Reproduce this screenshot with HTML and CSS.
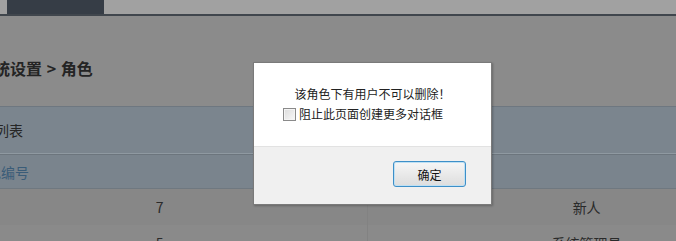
FILE: index.html
```html
<!DOCTYPE html>
<html lang="zh-CN">
<head>
<meta charset="utf-8">
<title>角色</title>
<link rel="stylesheet" href="styles.css">
</head>
<body>
<div class="page">
  <div class="topbar"><div class="tab"></div></div>
  <div class="content">
    <h2 class="title">系统设置 &gt; 角色</h2>
    <div class="panel">
      <div class="panel-head">角色列表</div>
      <table class="grid">
        <colgroup><col class="c1"><col class="c2"></colgroup>
        <thead>
          <tr><th>角色编号</th><th></th></tr>
        </thead>
        <tbody>
          <tr><td>7</td><td>新人</td></tr>
          <tr class="alt"><td>5</td><td>系统管理员</td></tr>
        </tbody>
      </table>
    </div>
  </div>
</div>
<div class="dialog">
  <div class="dialog-body">
    <p class="msg">该角色下有用户不可以删除！</p>
    <label class="opt"><span class="box"></span>阻止此页面创建更多对话框</label>
  </div>
  <div class="dialog-foot">
    <button class="btn">确定</button>
  </div>
</div>
</body>
</html>
```
FILE: styles.css
```css
html, body {
  margin: 0;
  padding: 0;
  width: 676px;
  height: 241px;
  overflow: hidden;
  background: #8b8b8b;
  font-family: "Noto Sans CJK SC", "Noto Sans", sans-serif;
}
.page {
  margin-left: -48px;
  width: 900px;
}
.topbar {
  height: 14px;
  background: #a1a1a1;
  border-bottom: 2px solid #40464d;
  padding-left: 55px;
}
.tab {
  width: 97px;
  height: 14px;
  background: #363d46;
}
.title {
  margin: 0;
  padding: 42px 0 0 26px;
  height: 48px;
  font-size: 16px;
  line-height: 20px;
  font-weight: bold;
  color: #242424;
  word-spacing: 1px;
}
.panel {
  border-top: 1px solid #6e7780;
}
.panel-head {
  height: 46px;
  line-height: 46px;
  padding-left: 15px;
  background: #7b858e;
  font-size: 14px;
  color: #262626;
  border-bottom: 1px solid #8f99a1;
}
.grid {
  border-collapse: collapse;
  width: 854px;
  font-size: 14px;
  border-top: 1px solid #6c757d;
}
.c1 { width: 416px; }
.c2 { width: 438px; }
.grid th {
  height: 33px;
  padding: 0 0 0 21px;
  background: #7a848d;
  color: #3a5c78;
  font-weight: normal;
  text-align: left;
  border-bottom: 1px solid #6f7880;
}
.grid td {
  height: 36px;
  padding: 0;
  text-align: center;
  color: #2a2a2a;
  background: #878787;
  border-right: 1px solid #828282;
}
.grid tr.alt td {
  background: #8a8a8a;
}
.dialog {
  position: absolute;
  left: 253px;
  top: 62px;
  width: 237px;
  height: 141px;
  border: 1px solid #7a7a7a;
  background: #fff;
  box-shadow: 1px 1px 2px rgba(0,0,0,0.25);
  display: flex;
  flex-direction: column;
}
.dialog-body {
  height: 83px;
  padding-top: 22px;
  box-sizing: border-box;
  font-size: 12px;
  color: #222;
}
.msg {
  margin: 0;
  text-align: center;
  line-height: 18px;
}
.opt {
  display: flex;
  align-items: center;
  gap: 3px;
  margin: 3px 0 0 29px;
  line-height: 16px;
}
.box {
  width: 11px;
  height: 11px;
  border: 1px solid #8a8a8a;
  background: linear-gradient(135deg, #dcdcdc, #f8f8f8);
  box-shadow: inset 0 0 0 1px #f4f4f4;
}
.dialog-foot {
  flex: 1;
  background: #f0f0f0;
  border-top: 1px solid #e2e2e2;
  display: flex;
  justify-content: flex-end;
  align-items: flex-start;
  padding: 14px 25px 0 0;
}
.btn {
  width: 73px;
  height: 26px;
  border: 1px solid #3d8fc8;
  border-radius: 3px;
  background: linear-gradient(#f6f6f6, #dddddd);
  box-shadow: inset 0 0 0 1px #bfe0f3;
  font-family: "Noto Sans CJK SC", sans-serif;
  font-size: 12px;
  color: #111;
  padding: 0;
}
```
